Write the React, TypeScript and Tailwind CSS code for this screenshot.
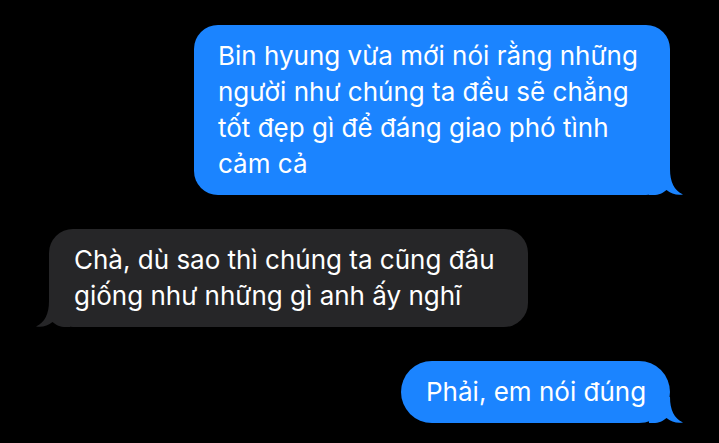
import React from "react";

function Tail({ color, side }: { color: string; side: "right" | "left" }) {
  return (
    <svg
      width="34"
      height="26"
      viewBox="0 0 34 26"
      className={
        side === "right"
          ? "absolute bottom-0 right-[-13px]"
          : "absolute bottom-0 left-[-13px] scale-x-[-1]"
      }
    >
      <path
        d="M0 0 H21 C21 13 25 21 34 25.5 C28 26.5 22 25 17.5 21 C14 24 10 26 4 26 H0 Z"
        fill={color}
      />
    </svg>
  );
}

export default function App() {
  const font = { fontFamily: "Inter, 'Noto Sans', sans-serif" };
  return (
    <div
      className="w-[719px] h-[443px] bg-black flex flex-col pt-[25px] px-[49px] gap-[34px] overflow-hidden"
      style={font}
    >
      <div className="self-end relative w-[476px] rounded-[24px] bg-[#1b84ff] px-[24px] py-[13px] text-white text-[26px] leading-[36px] whitespace-nowrap">
        Bin hyung vừa mới nói rằng những
        <br />
        người như chúng ta đều sẽ chẳng
        <br />
        tốt đẹp gì để đáng giao phó tình
        <br />
        cảm cả
        <Tail color="#1b84ff" side="right" />
      </div>
      <div className="self-start relative w-[479px] rounded-[24px] bg-[#262628] px-[25px] py-[13px] text-white text-[26px] leading-[36px] whitespace-nowrap">
        Chà, dù sao thì chúng ta cũng đâu
        <br />
        giống như những gì anh ấy nghĩ
        <Tail color="#262628" side="left" />
      </div>
      <div className="self-end relative w-[269px] rounded-full bg-[#1b84ff] pl-[25px] pr-[20px] py-[13px] text-white text-[26px] leading-[36px] whitespace-nowrap">
        Phải, em nói đúng
        <Tail color="#1b84ff" side="right" />
      </div>
    </div>
  );
}
